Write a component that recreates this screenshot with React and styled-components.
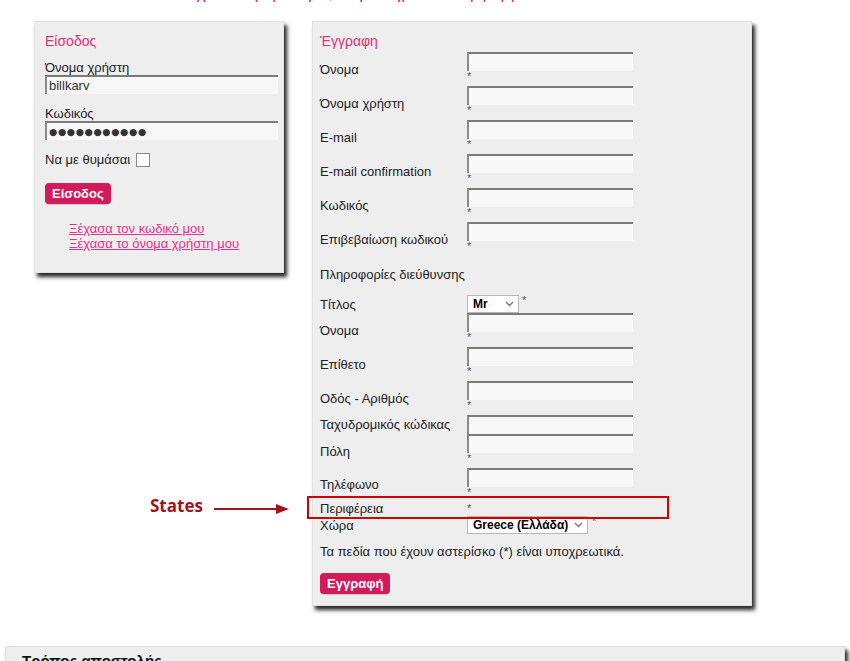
import React from 'react'
import styled, { createGlobalStyle } from 'styled-components';

const GlobalStyle = createGlobalStyle`
    body {
        margin: 0;
        background: #fff;
        font-family: "Liberation Sans", Arial, sans-serif;
        font-size: 13px;
        color: #222;
    }
`;

const Page = styled.div`
    position: relative;
    height: 661px;
    overflow: hidden;
`;

const TopNote = styled.div`
    height: 5px;
    overflow: hidden;
    padding-left: 120px;
    color: #e0307a;
    font-size: 18px;
    line-height: 20px;
    & span { display: block; margin-top: -18px; }
`;

const Columns = styled.div`
    display: flex;
    align-items: flex-start;
    gap: 28px;
    padding: 16px 0 0 34px;
`;

const Panel = styled.div`
    box-sizing: border-box;
    width: ${({ w }) => w}px;
    background: #eeeeee;
    border: 1px solid #e2e2e2;
    box-shadow: 3px 4px 4px rgba(0, 0, 0, 0.85);
    padding: ${({ pad }) => pad};
`;

const Title = styled.div`
    color: #e0307a;
    font-size: 14px;
    line-height: 18px;
    margin-bottom: ${({ mb }) => mb || 0}px;
`;

const FieldLabel = styled.div`
    line-height: 14px;
    margin-top: ${({ mt }) => mt || 0}px;
`;

const Input = styled.input`
    display: block;
    box-sizing: border-box;
    width: ${({ w }) => w}px;
    height: 19px;
    margin: 0;
    padding: 0 2px;
    border: none;
    border-top: 2px solid #7b7b7b;
    border-left: 2px solid #8a8a8a;
    background: #f8f8f8;
    font-family: ${({ dots }) => dots ? '"DejaVu Sans", sans-serif' : '"Liberation Sans", Arial, sans-serif'};
    font-size: ${({ dots }) => dots ? '9.5px' : '13px'};
    letter-spacing: ${({ dots }) => dots ? '0.6px' : 'normal'};
    color: #333;
    outline: none;
`;

const CheckRow = styled.label`
    display: flex;
    align-items: center;
    gap: 6px;
    line-height: 18px;
    margin-top: 11px;
`;

const CheckBox = styled.span`
    display: inline-block;
    width: 12px;
    height: 12px;
    background: #fff;
    border: 1px solid #8a8a8a;
`;

const Button = styled.button`
    display: block;
    height: 21px;
    padding: 0 7px;
    margin-top: ${({ mt }) => mt}px;
    border: none;
    border-radius: 4px;
    background: #d31a5b;
    color: #fff;
    font-family: "Liberation Sans", Arial, sans-serif;
    font-weight: bold;
    font-size: 13px;
    box-shadow: 0 1px 1px rgba(0, 0, 0, 0.15);
`;

const Links = styled.div`
    display: flex;
    flex-direction: column;
    margin: 17px 0 0 24px;
    line-height: 15px;
    & a { color: #e8308a; text-decoration: underline; }
`;

const Row = styled.div`
    display: flex;
    align-items: center;
`;

const RowLabel = styled.div`
    width: 147px;
    flex-shrink: 0;
`;

const Field = styled.div`
    display: flex;
    flex-direction: ${({ inline }) => inline ? 'row' : 'column'};
    align-items: flex-start;
    padding-bottom: ${({ pb }) => pb || 0}px;
`;

const Star = styled.span`
    display: block;
    font-size: 11px;
    line-height: 11px;
    height: 11px;
    color: #555;
    padding-left: ${({ pl }) => pl || 0}px;
`;

const Section = styled.div`
    line-height: 18px;
    margin: 10px 0 11px;
`;

const Select = styled.div`
    display: inline-flex;
    align-items: center;
    justify-content: space-between;
    box-sizing: border-box;
    width: ${({ w }) => w}px;
    height: 18px;
    padding: 0 4px 0 5px;
    background: #fff;
    border: 1px solid #b8b8b8;
    font-weight: bold;
    font-size: 12px;
    color: #000;
`;

const Note = styled.div`
    line-height: 16px;
    margin-top: 10px;
`;

const Bottom = styled.div`
    margin: 40px 5px 0;
    background: #eeeeee;
    border: 1px solid #dedede;
    box-shadow: 3px 4px 4px rgba(0, 0, 0, 0.85);
    padding: 5px 16px;
    font-weight: bold;
    font-size: 15px;
    color: #111;
`;

const Annot = styled.div`
    position: absolute;
    left: ${({ x }) => x}px;
    top: ${({ y }) => y}px;
`;

const StatesText = styled.span`
    font-family: "Open Sans", sans-serif;
    font-weight: bold;
    font-size: 17px;
    color: #a3141a;
`;

const RedBox = styled.div`
    position: absolute;
    left: 307px;
    top: 496px;
    width: 362px;
    height: 23px;
    box-sizing: border-box;
    border: 2px solid #d30000;
`;

const Chevron = () => (
    <svg width="9" height="6" viewBox="0 0 9 6">
        <path d="M1 1 L4.5 4.5 L8 1" fill="none" stroke="#777" strokeWidth="1.4" />
    </svg>
);

const Arrow = () => (
    <svg width="76" height="12" viewBox="0 0 76 12">
        <line x1="0" y1="6" x2="66" y2="6" stroke="#a3141a" strokeWidth="2.2" />
        <path d="M62 1 L75 6 L62 11 Z" fill="#a3141a" />
    </svg>
);

const TextRow = ({ label, star = true, pb = 4 }) => (
    <Row>
        <RowLabel>{label}</RowLabel>
        <Field pb={star ? pb : 0}>
            <Input w={166} readOnly />
            {star && <Star>*</Star>}
        </Field>
    </Row>
);

const App = () => {
    return (
        <Page>
            <GlobalStyle />
            <TopNote><span>Εάν δεν έχετε λογαριασμό, συμπληρώστε τη φόρμα</span></TopNote>
            <Columns>
                <Panel w={250} pad="10px 5px 21px 10px">
                    <Title>Είσοδος</Title>
                    <FieldLabel mt={11}>Όνομα χρήστη</FieldLabel>
                    <Input w={233} defaultValue="billkarv" readOnly />
                    <FieldLabel mt={13}>Κωδικός</FieldLabel>
                    <Input w={233} dots defaultValue="●●●●●●●●●●●" readOnly />
                    <CheckRow>Να με θυμάσαι <CheckBox /></CheckRow>
                    <Button mt={14}>Είσοδος</Button>
                    <Links>
                        <a href="#">Ξέχασα τον κωδικό μου</a>
                        <a href="#">Ξέχασα το όνομα χρήστη μου</a>
                    </Links>
                </Panel>
                <Panel w={440} pad="10px 8px 11px 7px">
                    <Title mb={2}>Έγγραφη</Title>
                    <TextRow label="Όνομα" />
                    <TextRow label="Όνομα χρήστη" />
                    <TextRow label="E-mail" />
                    <TextRow label="E-mail confirmation" />
                    <TextRow label="Κωδικός" />
                    <TextRow label="Επιβεβαίωση κωδικού" />
                    <Section>Πληροφορίες διεύθυνσης</Section>
                    <Row>
                        <RowLabel>Τίτλος</RowLabel>
                        <Field inline>
                            <Select w={52}>Mr <Chevron /></Select>
                            <Star pl={3}>*</Star>
                        </Field>
                    </Row>
                    <TextRow label="Όνομα" />
                    <TextRow label="Επίθετο" />
                    <TextRow label="Οδός - Αριθμός" />
                    <TextRow label="Ταχυδρομικός κώδικας" star={false} />
                    <TextRow label="Πόλη" />
                    <TextRow label="Τηλέφωνο" pb={3} />
                    <Row>
                        <RowLabel>Περιφέρεια</RowLabel>
                        <Field><Star>*</Star></Field>
                    </Row>
                    <Row>
                        <RowLabel>Χώρα</RowLabel>
                        <Field inline>
                            <Select w={121}>Greece (Ελλάδα) <Chevron /></Select>
                            <Star pl={4}>*</Star>
                        </Field>
                    </Row>
                    <Note>Τα πεδία που έχουν αστερίσκο (*) είναι υποχρεωτικά.</Note>
                    <Button mt={13}>Εγγραφή</Button>
                </Panel>
            </Columns>
            <Bottom>Τρόπος αποστολής</Bottom>
            <Annot x={150} y={494}><StatesText>States</StatesText></Annot>
            <Annot x={214} y={503}><Arrow /></Annot>
            <RedBox />
        </Page>
    )
}
export default App
